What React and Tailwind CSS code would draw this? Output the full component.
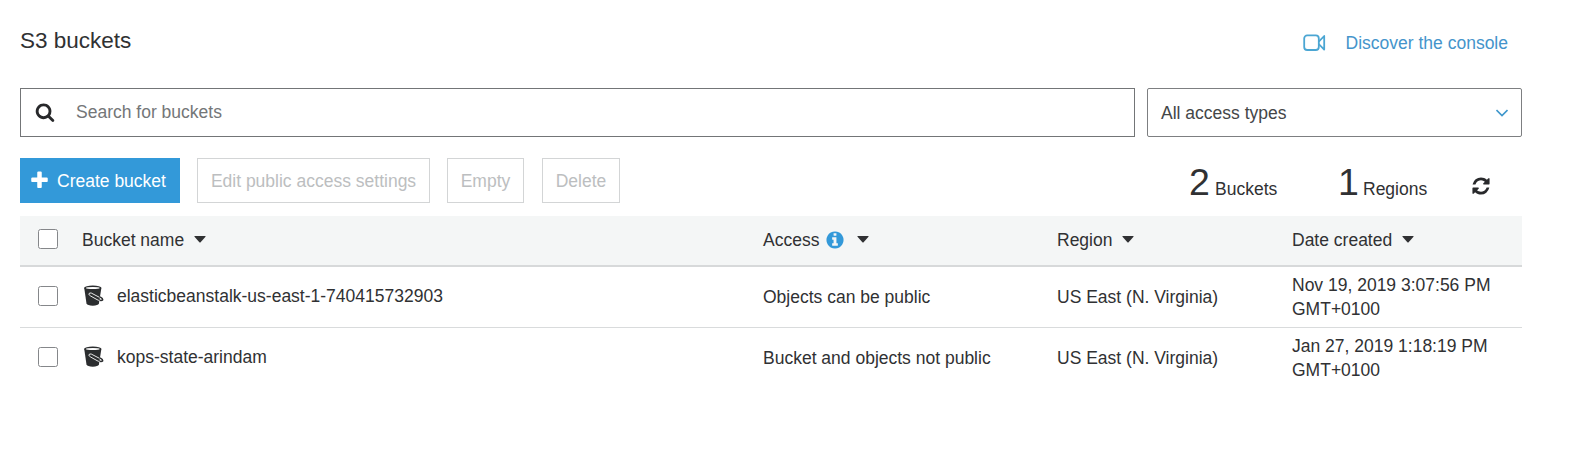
const REFRESH =
  "M1639 1056q0 5-1 7-64 268-268 434.5t-478 166.500q-146 0-282.500-55t-243.500-157l-129 129q-19 19-45 19t-45-19-19-45v-448q0-26 19-45t45-19h448q26 0 45 19t19 45-19 45l-137 137q71 66 161 102t187 36q134 0 250-65t186-179q11-17 53-117 8-23 30-23h192q13 0 22.500 9.500t9.500 22.500zm25-800v448q0 26-19 45t-45 19h-448q-26 0-45-19t-19-45 19-45l138-138q-148-137-349-137-134 0-250 65t-186 179q-11 17-53 117-8 23-30 23h-199q-13 0-22.500-9.500t-9.500-22.500v-7q65-268 270-434.500t480-166.500q146 0 284 55.500t245 156.500l130-129q19-19 45-19t45 19 19 45z";
const SEARCH =
  "M1216 832q0-185-131.500-316.500t-316.500-131.500-316.500 131.500-131.500 316.500 131.500 316.500 316.500 131.500 316.500-131.500 131.500-316.500zm512 832q0 52-38 90t-90 38q-54 0-90-38l-343-342q-179 124-399 124-143 0-273.500-55.500t-225-150-150-225-55.500-273.500 55.500-273.500 150-225 225-150 273.500-55.500 273.500 55.500 225 150 150 225 55.500 273.500q0 220-124 399l343 343q37 37 37 90z";
const INFO =
  "M1152 1376v-160q0-14-9-23t-23-9h-96v-512q0-14-9-23t-23-9h-320q-14 0-23 9t-9 23v160q0 14 9 23t23 9h96v320h-96q-14 0-23 9t-9 23v160q0 14 9 23t23 9h448q14 0 23-9t9-23zm-128-896v-160q0-14-9-23t-23-9h-192q-14 0-23 9t-9 23v160q0 14 9 23t23 9h192q14 0 23-9t9-23zm640 416q0 209-103 385.500t-279.500 279.500-385.500 103-385.500-103-279.500-279.500-103-385.500 103-385.500 279.500-279.500 385.500-103 385.500 103 279.500 279.500 103 385.500z";
const PLUS =
  "M1600 736v192q0 40-28 68t-68 28h-416v416q0 40-28 68t-68 28h-192q-40 0-68-28t-28-68v-416h-416q-40 0-68-28t-28-68v-192q0-40 28-68t68-28h416v-416q0-40 28-68t68-28h192q40 0 68 28t28 68v416h416q40 0 68 28t28 68z";

function Glyph({ d, className }) {
  return (
    <svg viewBox="0 0 1792 1792" fill="currentColor" className={className}>
      <path d={d} />
    </svg>
  );
}

function Caret() {
  return (
    <svg viewBox="0 0 12 7" className="ml-2.5 h-[7px] w-3 shrink-0" fill="#303133">
      <path d="M0.800 0h10.400q0.600 0.200 0.300 0.800L6.600 6.200q-0.600 0.500-1.200 0L0.500 0.800Q0.200 0.200 0.800 0z" />
    </svg>
  );
}

function VideoIcon() {
  return (
    <svg viewBox="0 0 23 18" className="h-[18px] w-[23px]" fill="none" stroke="#4ba6d3" strokeWidth="1.800" strokeLinejoin="round">
      <rect x="1.200" y="1.400" width="14.600" height="14.600" rx="3" />
      <path d="M15.800 7.600L21.200 2V15.600L15.800 10" />
    </svg>
  );
}

function BucketIcon() {
  return (
    <svg viewBox="0 0 20 21" className="mb-0.5 h-[21px] w-5">
      <path d="M0.200 2.800L2.500 18.600Q3.400 20.700 8.800 20.700Q14 20.700 14.900 18.600L17.400 2.800z" fill="#2b2d2f" />
      <ellipse cx="8.800" cy="2.900" rx="8.600" ry="2.300" fill="#2b2d2f" />
      <ellipse cx="8.800" cy="3" rx="6.900" ry="1" fill="#fff" />
      <path d="M16 11.800Q18.900 13.400 18.700 14.700Q17.800 16 14.600 15" fill="none" stroke="#2b2d2f" strokeWidth="1.500" />
      <path d="M15.400 12.300L7.200 8Q5 7.500 4.900 9.200Q5 10.200 6.800 11.100L13 14.600Q14.400 15.400 15.500 15.500" fill="none" stroke="#fff" strokeWidth="0.900" />
    </svg>
  );
}

function Checkbox({ className = "" }) {
  return <span role="checkbox" aria-checked="false" className={`ml-[18px] block size-5 rounded-[2.500px] border border-[#85878a] bg-white ${className}`} />;
}

function GhostButton({ children, className }) {
  return (
    <button className={`flex h-[45px] items-center justify-center border border-[#d3d5d6] bg-white text-[#bcbec0] ${className}`}>
      {children}
    </button>
  );
}

const COLS = "grid grid-cols-[62px_681px_294px_235px_230px] items-center";

const ROWS = [
  { name: "elasticbeanstalk-us-east-1-740415732903", access: "Objects can be public", date: "Nov 19, 2019 3:07:56 PM" },
  { name: "kops-state-arindam", access: "Bucket and objects not public", date: "Jan 27, 2019 1:18:19 PM" },
];

export default function App() {
  return (
    <main className="h-[456px] w-[1578px] overflow-hidden bg-white pl-5 font-['Liberation_Sans',Arial,sans-serif] text-[17.5px] leading-6 text-[#303133]">
      <div className="w-[1502px]">
        <header className="flex h-[88px] items-start justify-between">
          <h1 className="mt-[27px] text-[22.5px] leading-7">S3 buckets</h1>
          <a className="mt-[31px] mr-3.5 flex items-center gap-5 text-[#4494cb]">
            <VideoIcon />
            Discover the console
          </a>
        </header>

        <div className="flex gap-3">
          <div className="flex h-[49px] w-[1115px] items-center border border-[#737577] pl-[13.5px] text-[#747678]">
            <Glyph d={SEARCH} className="mr-[21.5px] mb-0.5 size-5 text-[#28292b]" />
            <span className="pb-px">Search for buckets</span>
          </div>
          <div className="flex h-[49px] w-[375px] items-center justify-between rounded-[2px] border border-[#7d7f81] pr-[13px] pl-[13px] text-[#444648]">
            <span className="pt-px">All access types</span>
            <svg viewBox="0 0 12 8" className="h-2 w-3" fill="none" stroke="#3f97cc" strokeWidth="1.600">
              <path d="M0.500 1L6 6.500L11.500 1" />
            </svg>
          </div>
        </div>

        <div className="mt-[21px] flex h-[58px] items-start">
          <button className="flex h-[45px] w-40 items-center bg-[#3399d9] pl-[9px] text-white">
            <Glyph d={PLUS} className="mr-[7px] size-[21px]" />
            Create bucket
          </button>
          <GhostButton className="ml-[17px] w-[233px]">Edit public access settings</GhostButton>
          <GhostButton className="ml-[17px] w-[77px]">Empty</GhostButton>
          <GhostButton className="ml-[18px] w-[78px]">Delete</GhostButton>
          <div className="-mt-px ml-auto flex items-baseline">
            <span className="w-[26px] text-[37.5px] leading-[50px]">2</span>
            <span className="w-[123px]">Buckets</span>
            <span className="w-[25px] text-[37.5px] leading-[50px]">1</span>
            <span className="w-[108px]">Regions</span>
          </div>
          <Glyph d={REFRESH} className="mt-[17.5px] mr-[31px] size-5 text-[#28292b]" />
        </div>

        <div className={`${COLS} h-[51px] border-b-2 border-[#d7d9da] bg-[#f4f6f6] pb-0.5`}>
          <Checkbox className="mb-px" />
          <div className="flex items-center">Bucket name<Caret /></div>
          <div className="flex items-center">
            Access
            <Glyph d={INFO} className="mr-0.5 ml-1.5 size-5 text-[#3399d9]" />
            <Caret />
          </div>
          <div className="flex items-center">Region<Caret /></div>
          <div className="flex items-center">Date created<Caret /></div>
        </div>

        {ROWS.map((row, i) => (
          <div key={row.name} className={i === 0 ? `${COLS} h-[61px] border-b border-[#d9dbdc] pb-0.5` : `${COLS} h-[61px] pb-[3px]`}>
            <Checkbox />
            <div className="flex items-center gap-[13px] pl-0.5">
              <BucketIcon />
              {row.name}
            </div>
            <div className="pt-px">{row.access}</div>
            <div className="pt-px">US East (N. Virginia)</div>
            <div className="pt-px">
              {row.date}
              <br />
              GMT+0100
            </div>
          </div>
        ))}
      </div>
    </main>
  );
}
